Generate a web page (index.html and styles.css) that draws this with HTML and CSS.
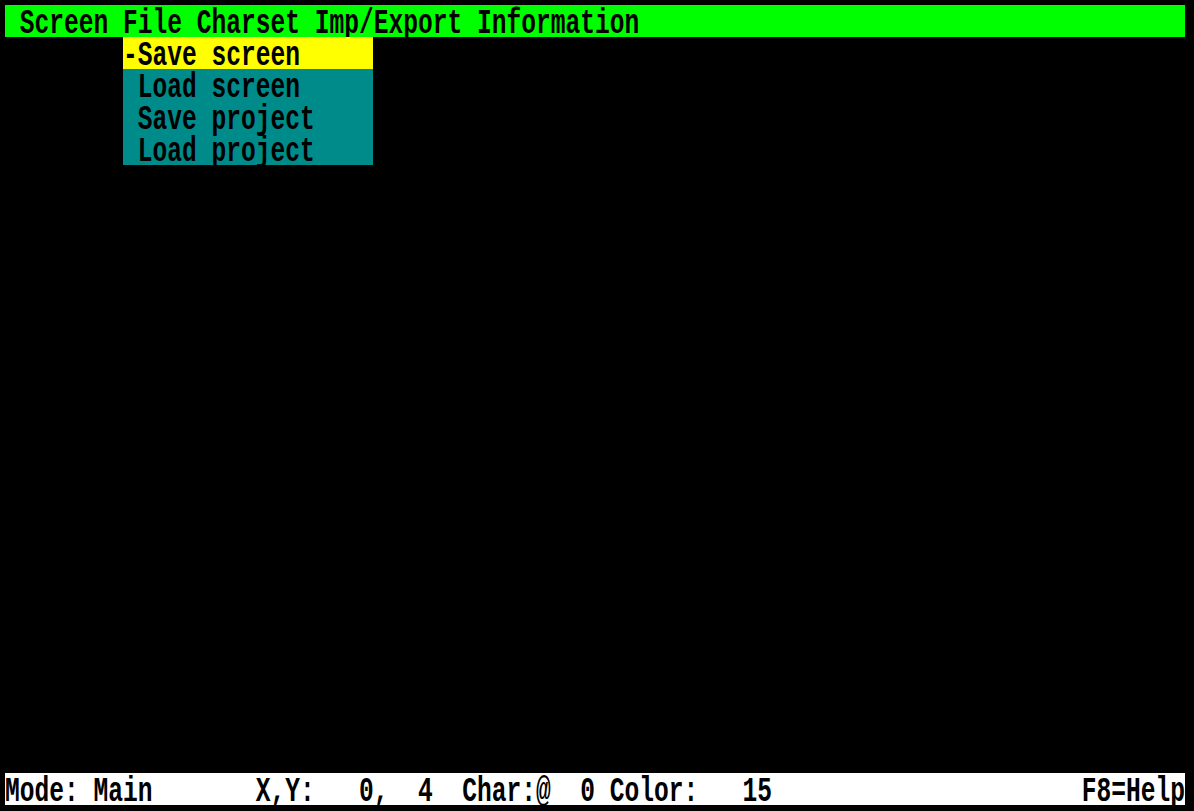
FILE: index.html
```html
<!DOCTYPE html>
<html>
<head>
<meta charset="utf-8">
<link rel="stylesheet" href="styles.css">
<title>Screen editor</title>
</head>
<body>
<div class="screen">
  <div class="row bar-top"><span class="txt"> Screen File Charset Imp/Export Information</span></div>
  <div class="canvas"></div>
  <div class="row bar-status"><span class="txt">Mode: Main       X,Y:   0,  4  Char:@  0 Color:   15                     F8=Help</span></div>
  <div class="menu">
    <div class="row item selected"><span class="txt">-Save screen</span></div>
    <div class="row item"><span class="txt"> Load screen</span></div>
    <div class="row item"><span class="txt"> Save project</span></div>
    <div class="row item"><span class="txt"> Load project</span></div>
  </div>
</div>
</body>
</html>
```

FILE: styles.css
```css
html, body {
  margin: 0;
  padding: 0;
  background: #000;
}

body {
  width: 1194px;
  height: 811px;
  overflow: hidden;
}

.screen {
  position: relative;
  margin: 5px 0 0 5px;
  width: 1180px;
  height: 800px;
  display: grid;
  grid-template-rows: 32px 1fr 32px;
  background: #000;
  font-family: "Liberation Mono", "DejaVu Sans Mono", monospace;
  font-weight: bold;
  color: #000;
}

.row {
  height: 32px;
  display: flex;
  align-items: flex-start;
}

.txt {
  display: block;
  white-space: pre;
  font-size: 24.583px;
  line-height: 19px;
  height: 19px;
  margin-top: 5px;
  transform-origin: 0 0;
  transform: scaleY(1.42);
}

.bar-top {
  background: #00ff00;
}

.bar-status {
  background: #ffffff;
}

.canvas {
  background: #000;
}

.menu {
  position: absolute;
  left: 118px;
  top: 32px;
  width: 250px;
  display: flex;
  flex-direction: column;
}

.item {
  background: #008b8b;
}

.item.selected {
  background: #ffff00;
}
```
